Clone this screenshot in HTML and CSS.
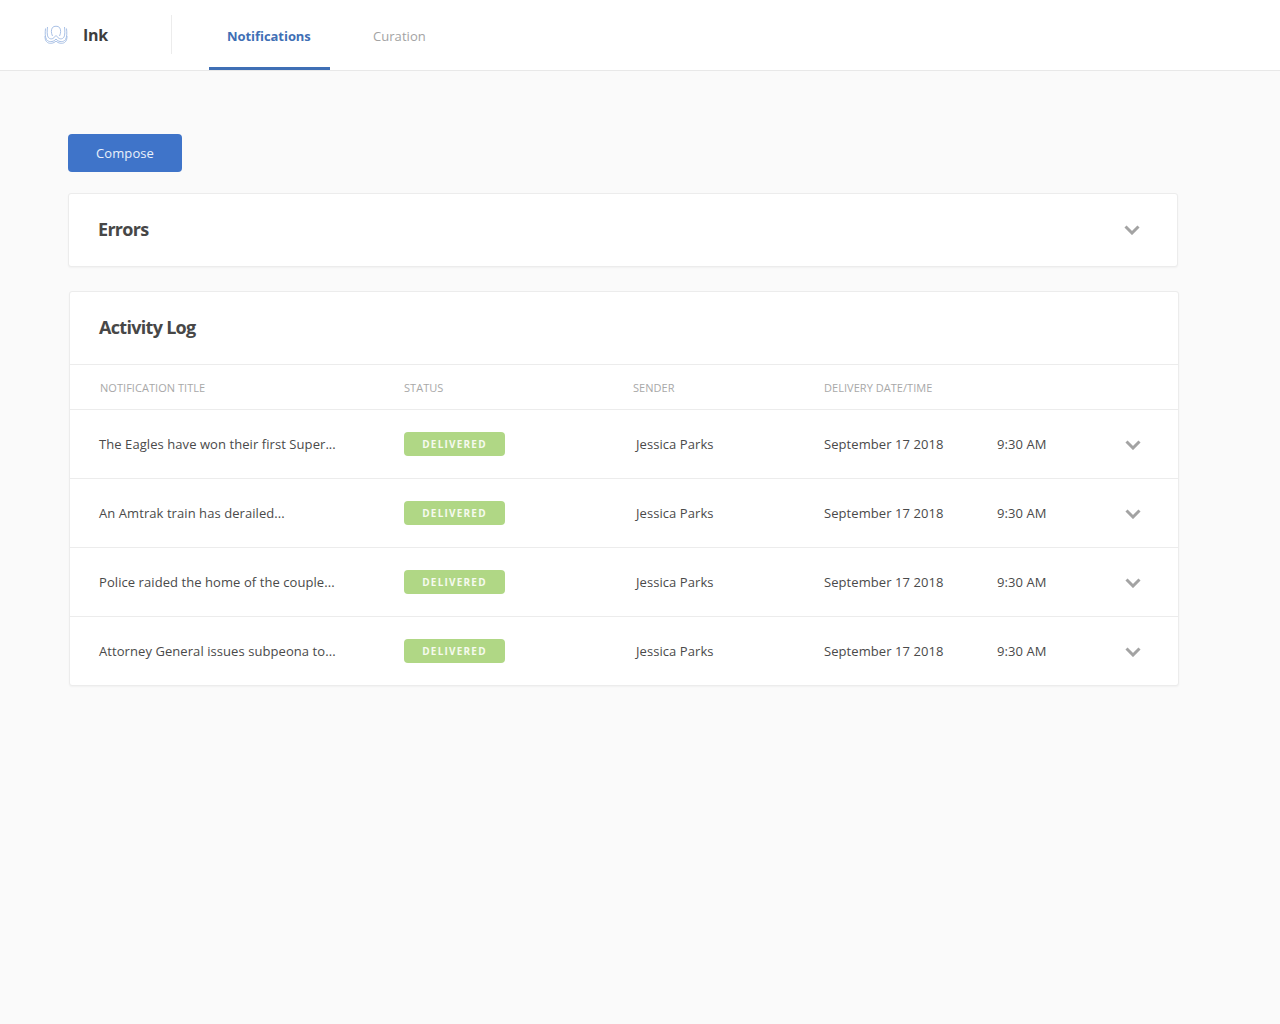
FILE: index.html
```html
<!DOCTYPE html>
<html lang="en">
<head>
<meta charset="utf-8">
<title>Ink</title>
<link rel="stylesheet" href="styles.css">
</head>
<body>
<header class="nav">
  <div class="brand">
    <svg class="logo" width="24" height="20" viewBox="0 0 24 20" fill="none" stroke="#a9c1e6" stroke-width="1">
      <path d="M8.500 11C7 8 7 4.500 8.500 2.500 10 .8 14 .8 15.500 2.500 17 4.500 17 8 15.500 11"/>
      <path d="M3.500 2C3 6 3 10 4 12c1.500 2.500 5 2.500 6.500 0L12 10.500 13.500 12c1.500 2.500 5 2.500 6.500 0 1-2 1-6 .5-10"/>
      <path d="M1.500 3.500C1 8 1 12 2.500 14.500c2 3 6.500 2.500 8.500 .5l1-1 1 1c2 2 6.500 2.500 8.500-.5C23 12 23 8 22.500 3.500"/>
      <path d="M1 11c0 3 .5 5 2.500 6.500 2.500 1.500 6 1 8.500-1.500 2.500 2.500 6 3 8.500 1.500 2-1.500 2.500-3.500 2.500-6.500"/>
    </svg>
    <span class="brand-name">Ink</span>
  </div>
  <nav class="tabs">
    <a class="tab tab-active">Notifications</a>
    <a class="tab">Curation</a>
  </nav>
</header>
<main class="main">
  <button class="compose">Compose</button>
  <section class="card errors">
    <h2 class="card-title">Errors</h2>
    <svg class="chev" width="16" height="10" viewBox="0 0 16 10"><path d="M1.500 1.500 8 8l6.500-6.500"/></svg>
  </section>
  <section class="card activity">
    <div class="activity-head"><h2 class="card-title">Activity Log</h2></div>
    <div class="row row-head">
      <span>NOTIFICATION TITLE</span><span>STATUS</span><span>SENDER</span><span>DELIVERY DATE/TIME</span>
    </div>
    <div class="row">
      <span>The Eagles have won their first Super...</span><span class="badge">DELIVERED</span><span>Jessica Parks</span><span>September 17 2018</span><span>9:30 AM</span>
      <svg class="chev chev-row" width="16" height="10" viewBox="0 0 16 10"><path d="M1.500 1.500 8 8l6.500-6.500"/></svg>
    </div>
    <div class="row">
      <span>An Amtrak train has derailed...</span><span class="badge">DELIVERED</span><span>Jessica Parks</span><span>September 17 2018</span><span>9:30 AM</span>
      <svg class="chev chev-row" width="16" height="10" viewBox="0 0 16 10"><path d="M1.500 1.500 8 8l6.500-6.500"/></svg>
    </div>
    <div class="row">
      <span>Police raided the home of the couple...</span><span class="badge">DELIVERED</span><span>Jessica Parks</span><span>September 17 2018</span><span>9:30 AM</span>
      <svg class="chev chev-row" width="16" height="10" viewBox="0 0 16 10"><path d="M1.500 1.500 8 8l6.500-6.500"/></svg>
    </div>
    <div class="row">
      <span>Attorney General issues subpeona to...</span><span class="badge">DELIVERED</span><span>Jessica Parks</span><span>September 17 2018</span><span>9:30 AM</span>
      <svg class="chev chev-row" width="16" height="10" viewBox="0 0 16 10"><path d="M1.500 1.500 8 8l6.500-6.500"/></svg>
    </div>
  </section>
</main>
</body>
</html>
```
FILE: styles.css
```css
* { box-sizing: border-box; }
html, body { height: 100%; }
body {
  margin: 0;
  background: #fafafa;
  color: #444;
  font-family: "Open Sans", "Noto Sans", sans-serif;
  font-size: 13px;
}
.nav {
  display: flex;
  align-items: stretch;
  height: 71px;
  background: #fff;
  border-bottom: 1px solid #e8e8e8;
}
.brand {
  display: flex;
  align-items: center;
  align-self: center;
  width: 172px;
  height: 39px;
  padding-left: 44px;
  border-right: 1px solid #ececec;
  margin-top: -1px;
}
.logo { flex: none; }
.brand-name {
  margin-left: 15px;
  font-size: 16px;
  font-weight: 700;
  color: #3d3d3d;
  letter-spacing: -.3px;
}
.tabs { display: flex; margin-left: 37px; gap: 24px; }
.tab {
  display: flex;
  align-items: center;
  height: 70px;
  color: #a3a3a3;
  letter-spacing: .05px;
}
.tab-active {
  width: 121px;
  padding: 5px 0 0 18px;
  color: #3f6fb5;
  font-weight: 700;
  letter-spacing: -.05px;
  border-bottom: 3px solid #3f6fb5;
}
.tab:not(.tab-active) { padding: 1px 18px 0 19px; }
.main { padding: 63px 0 0 68px; width: 1179px; }
.compose {
  display: block;
  width: 114px;
  height: 38px;
  padding: 0;
  border: 0;
  border-radius: 4px;
  background: #3f74c9;
  color: #eaf1fb;
  font: 13px "Open Sans", sans-serif;
  letter-spacing: .1px;
}
.card {
  background: #fff;
  border: 1px solid #ececec;
  border-radius: 3px;
  box-shadow: 0 1px 2px rgba(0, 0, 0, .04);
}
.errors {
  display: flex;
  align-items: center;
  justify-content: space-between;
  width: 1110px;
  height: 74px;
  margin-top: 21px;
  padding: 0 37px 0 29px;
}
.errors .card-title { margin-bottom: 2px; }
.card-title {
  margin: 0;
  font-size: 18px;
  font-weight: 700;
  color: #474747;
  letter-spacing: -.7px;
}
.chev { flex: none; fill: none; stroke: #a3a3a3; stroke-width: 3; }
.chev-row { margin: 2px 0 0 -1px; }
.activity { width: 1110px; margin: 24px 0 0 1px; }
.activity-head {
  display: flex;
  align-items: center;
  height: 72px;
  padding: 0 0 2px 29px;
}
.row {
  display: grid;
  grid-template-columns: 305px 232px 188px 173px 129px 16px;
  align-items: center;
  height: 69px;
  padding-left: 29px;
  border-top: 1px solid #ececec;
  color: #4a4a4a;
  letter-spacing: .07px;
}
.row-head {
  height: 45px;
  padding-left: 30px;
  grid-template-columns: 304px 229px 191px 1fr;
  font-size: 11px;
  color: #a8a8a8;
  letter-spacing: .04px;
}
.badge {
  width: 101px;
  height: 24px;
  line-height: 24px;
  text-align: center;
  border-radius: 4px;
  background: #b0d785;
  color: #f6faef;
  font-size: 10px;
  font-weight: 700;
  letter-spacing: 1.200px;
}
```
